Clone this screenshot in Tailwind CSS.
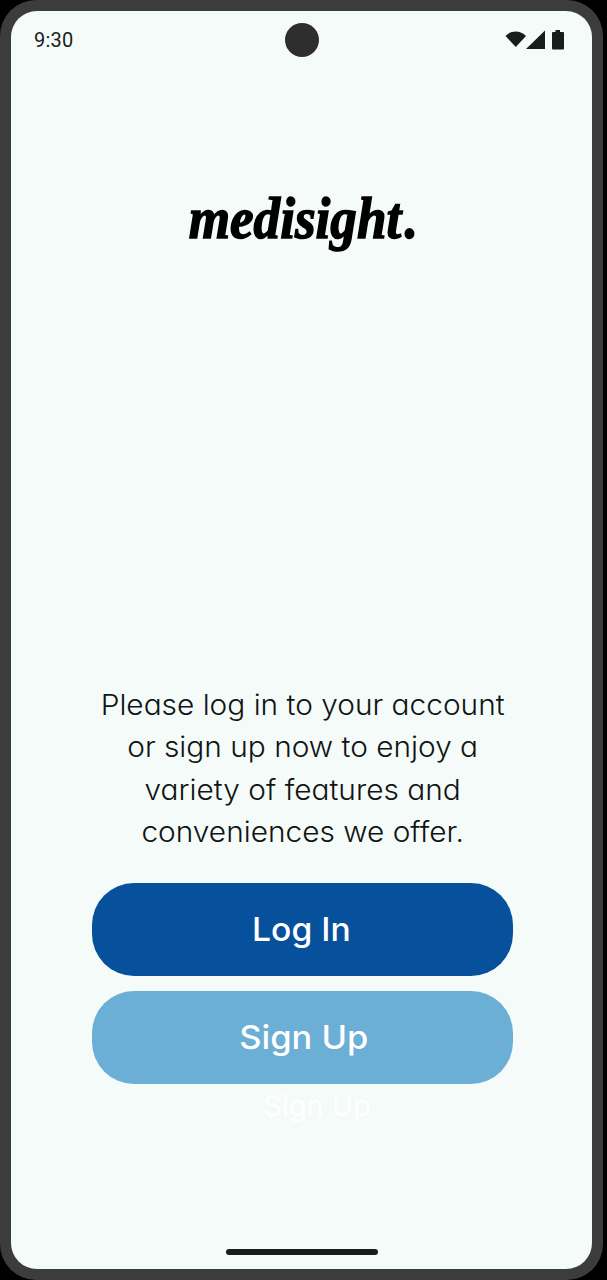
<!DOCTYPE html>
<html lang="en">
<head>
<meta charset="utf-8">
<title>medisight.</title>
<script src="https://cdn.jsdelivr.net/npm/@tailwindcss/browser@4"></script>
</head>
<body class="bg-black">
<div class="w-[603px] h-[1280px] rounded-[36px] bg-[#3c3c3c] p-[11px] overflow-hidden">
  <main class="w-[581px] h-[1258px] rounded-[26px] bg-[#f5fbf9] flex flex-col items-center overflow-hidden">
    <header class="w-full h-[57px] grid grid-cols-3 items-center pl-[23px] pr-[27px] shrink-0">
      <span class="font-[Roboto] text-[20px] leading-none text-[#171d1b] tracking-[0.2px]">9:30</span>
      <span class="w-[34px] h-[34px] rounded-full bg-[#2e2e2e] justify-self-center ml-1"></span>
      <svg class="justify-self-end w-[60px] h-[22px]" viewBox="0 0 60 22" fill="#171d1b">
        <path d="M0.500 7C6 1 15.500 1 21 7L10.800 18Z"/>
        <path d="M21 20H40V1.500Z"/>
        <path d="M50.500 1H55V3H58Q59 3 59 4V19.500Q59 20.500 58 20.500H48Q47 20.500 47 19.500V4Q47 3 48 3H50.500Z"/>
      </svg>
    </header>
    <h1 class="mt-[108px] ml-[4px] h-[84px] leading-[84px] text-[59px] font-bold italic font-['Liberation_Serif'] text-black whitespace-nowrap scale-x-[0.9] [-webkit-text-stroke:1.5px_black]">medisight<span class="ml-[4px]">.</span></h1>
    <p class="mt-[424px] ml-[2px] h-[169px] text-[28px] leading-[42.3px] font-light font-[Inter] [font-feature-settings:'cv11'] text-[#101413] whitespace-nowrap flex flex-col items-center scale-x-[1.065]">
      <span>Please log in to your account</span>
      <span>or sign up now to enjoy a</span>
      <span>variety of features and</span>
      <span>conveniences we offer.</span>
    </p>
    <div class="mt-[30px] ml-[2px] flex flex-col gap-[15px] w-[421px] font-[Inter] font-medium text-[33px] text-white">
      <button class="h-[93px] rounded-[42px] bg-[#07519c]"><span class="inline-block mr-[2px] scale-x-[1.02]">Log In</span></button>
      <button class="h-[93px] rounded-[42px] bg-[#6baed6]"><span class="inline-block ml-[3px] scale-x-[1.045]">Sign Up</span></button>
    </div>
    <span class="mt-px ml-[31px] h-[42px] leading-[42px] font-[Inter] text-[28px] text-white scale-x-[1.03]">Sign Up</span>
    <span class="mt-auto mb-[14px] w-[152px] h-[6px] rounded-full bg-[#171d1b] shrink-0"></span>
  </main>
</div>
</body>
</html>
